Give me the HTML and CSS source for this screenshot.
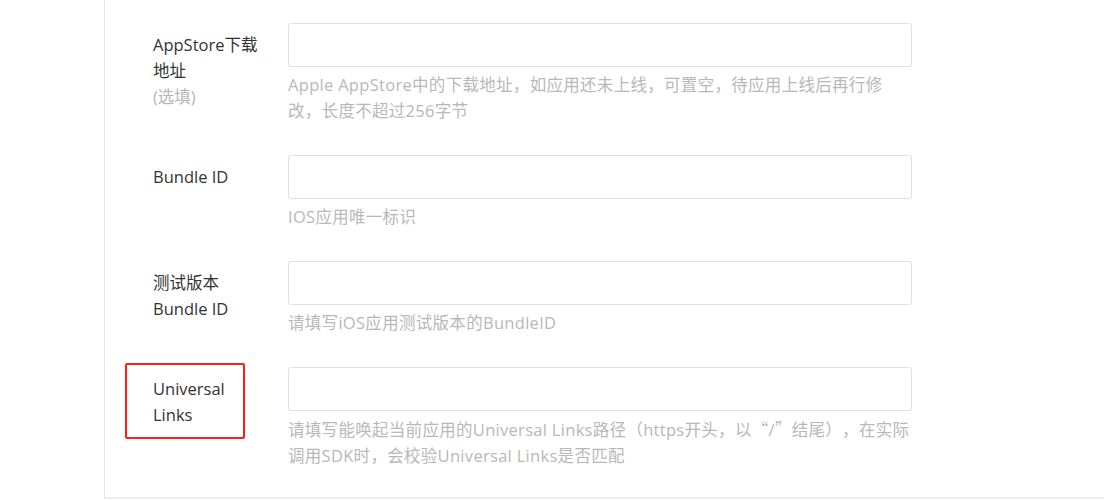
FILE: index.html
```html
<!DOCTYPE html>
<html lang="zh-CN">
<head>
<meta charset="utf-8">
<title>iOS 应用设置</title>
<link rel="stylesheet" href="styles.css">
</head>
<body>
<div class="panel">
  <form class="form">
    <div class="row">
      <label class="label">AppStore下载地址<span class="optional">(选填)</span></label>
      <div class="field">
        <input class="input" type="text">
        <p class="help">Apple AppStore中的下载地址，如应用还未上线，可置空，待应用上线后再行修改，长度不超过256字节</p>
      </div>
    </div>
    <div class="row">
      <label class="label">Bundle ID</label>
      <div class="field">
        <input class="input" type="text">
        <p class="help">IOS应用唯一标识</p>
      </div>
    </div>
    <div class="row">
      <label class="label">测试版本 Bundle ID</label>
      <div class="field">
        <input class="input" type="text">
        <p class="help">请填写iOS应用测试版本的BundleID</p>
      </div>
    </div>
    <div class="row">
      <label class="label marked">Universal Links</label>
      <div class="field">
        <input class="input" type="text">
        <p class="help">请填写能唤起当前应用的Universal Links路径（https开头，以<span class="cjk">“</span>/<span class="cjk">”</span>结尾），在实际调用SDK时，会校验Universal Links是否匹配</p>
      </div>
    </div>
  </form>
</div>
</body>
</html>
```
FILE: styles.css
```css
html, body {
  margin: 0;
  padding: 0;
  background: #fff;
}
body {
  font-family: "Open Sans", "Noto Sans CJK SC", sans-serif;
  font-size: 16.5px;
  color: #333;
  overflow: hidden;
}
.panel {
  margin-left: 104px;
  height: 497px;
  border-left: 1px solid #e6e6e6;
  border-bottom: 2px solid #ececec;
  box-sizing: content-box;
}
.form {
  padding: 23px 0 0 48px;
}
.row {
  display: flex;
  gap: 20px;
  margin-bottom: 31px;
}
.label {
  width: 115px;
  flex: none;
  padding-top: 9px;
  line-height: 26px;
  color: #333;
  position: relative;
}
.optional {
  display: block;
  color: #b5b5b5;
}
.marked::after {
  content: "";
  position: absolute;
  left: -28px;
  top: -4px;
  width: 116px;
  height: 72px;
  border: 2.5px solid #ff1e14;
  border-radius: 2px;
}
.field {
  width: 624px;
  flex: none;
}
.input {
  display: block;
  box-sizing: border-box;
  width: 100%;
  height: 44px;
  margin: 0;
  border: 1px solid #e0e0e0;
  border-radius: 3px;
  background: #fff;
  font: inherit;
  outline: none;
}
.help {
  margin: 5px 0 0;
  line-height: 26px;
  color: #b8b8b8;
  text-spacing-trim: space-all;
  letter-spacing: 0.3px;
}
.cjk {
  font-family: "Noto Sans CJK SC", sans-serif;
}
```
